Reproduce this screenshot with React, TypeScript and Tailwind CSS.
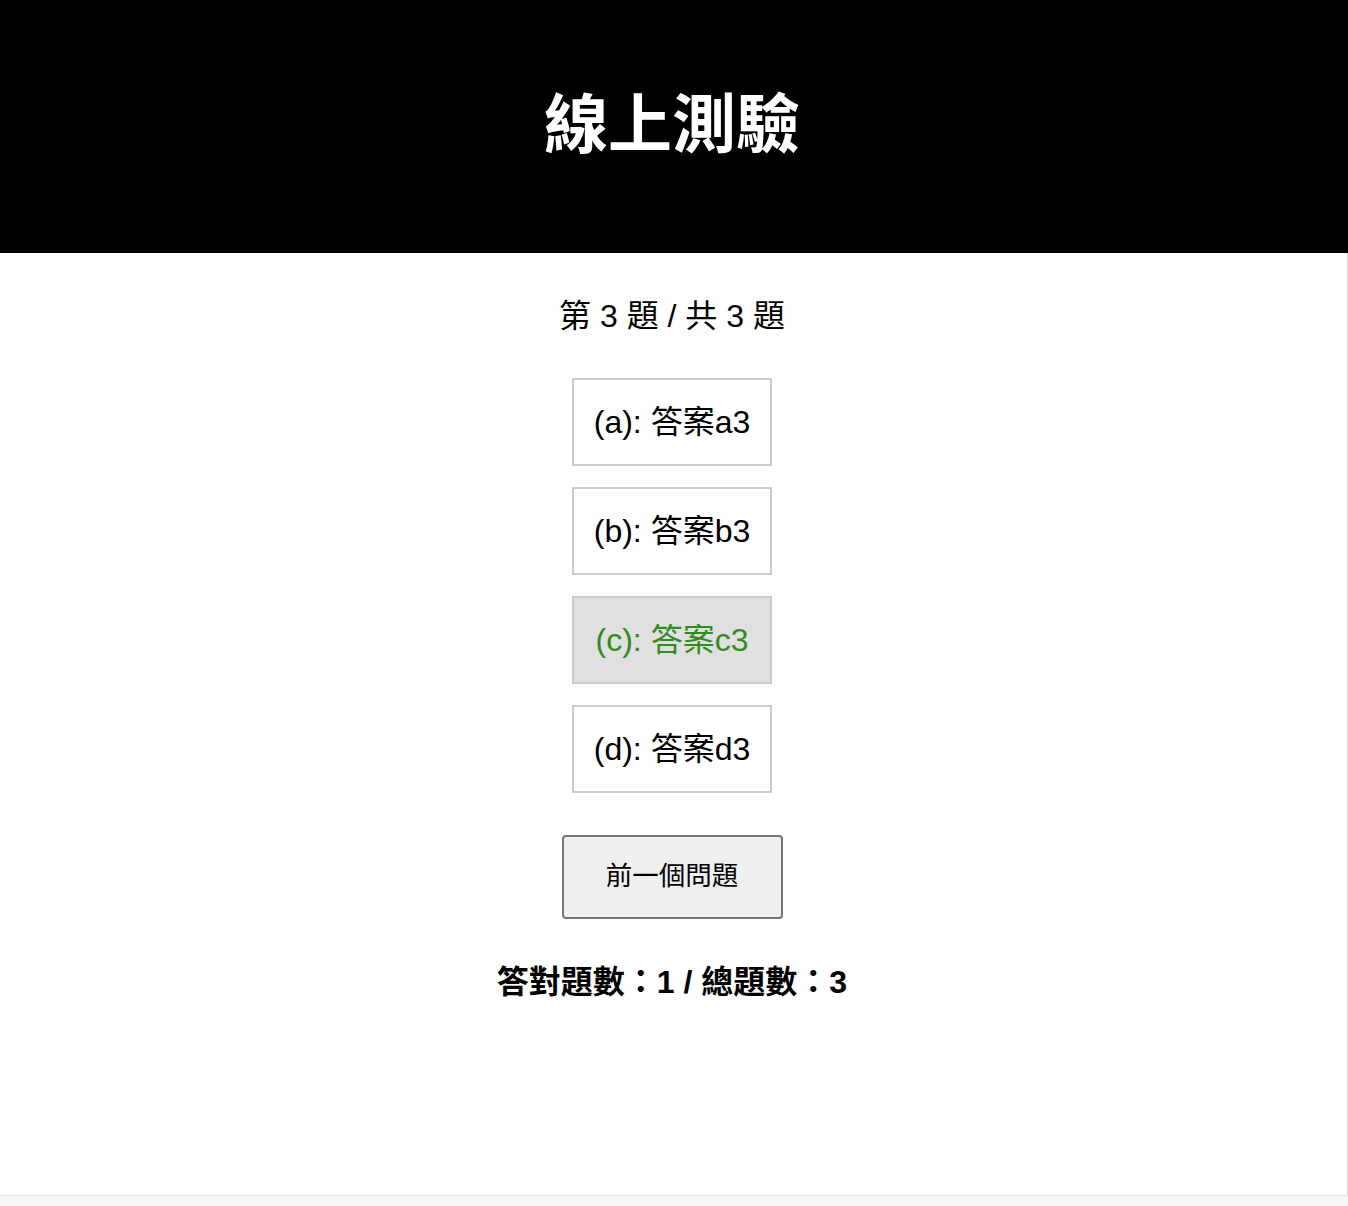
import React from "react";

const font = '"Liberation Sans", Arial, "Noto Sans CJK TC", sans-serif';

const options = [
  { label: "(a): 答案a3", selected: false },
  { label: "(b): 答案b3", selected: false },
  { label: "(c): 答案c3", selected: true },
  { label: "(d): 答案d3", selected: false },
];

export default function App() {
  return (
    <div className="w-[1348px] h-[1206px] bg-[#f6f6f4] overflow-hidden" style={{ fontFamily: font }}>
      <div className="h-[1196px] bg-white border-b border-[#e6e6e6] flex flex-col">
        <header className="h-[253px] bg-black flex items-center justify-center pb-[3px] pr-[4px]">
          <h1 className="text-white text-[64px] font-bold leading-none">線上測驗</h1>
        </header>
        <main className="flex-1 w-[1348px] border-r border-[#d4d4d4] pr-[3px] flex flex-col items-center">
          <div className="mt-[45px] h-[36px] leading-[36px] text-[32px] text-black">第 3 題 / 共 3 題</div>
          <div className="mt-[44px] flex flex-col items-center gap-[21px]">
            {options.map((o) => (
              <div
                key={o.label}
                className={
                  o.selected
                    ? "w-[200px] h-[88px] border-2 border-[#cccccc] bg-[#e0e0e0] text-[#338a22] text-[32px] flex items-center justify-center"
                    : "w-[200px] h-[88px] border-2 border-[#cccccc] bg-white text-black text-[32px] flex items-center justify-center"
                }
              >
                {o.label}
              </div>
            ))}
          </div>
          <button className="mt-[42px] w-[221px] h-[84px] bg-[#efefef] border-2 border-[#767676] rounded-[4px] text-[26.5px] text-black flex items-center justify-center">
            前一個問題
          </button>
          <div className="mt-[44px] h-[38px] leading-[38px] text-[32px] font-bold text-black">答對題數：1 / 總題數：3</div>
        </main>
      </div>
    </div>
  );
}
